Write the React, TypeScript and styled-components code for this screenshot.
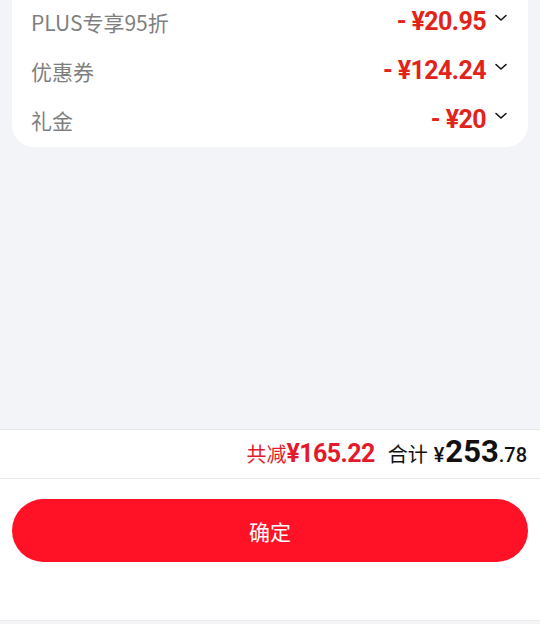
import React, { FC } from "react";
import styled, { createGlobalStyle } from "styled-components";

const GlobalStyle = createGlobalStyle`
    html, body {
        margin: 0;
        padding: 0;
        background: #f3f4f8;
    }
    body {
        font-family: "Noto Sans CJK SC", "Noto Sans", sans-serif;
    }
`;

const Page = styled.div`
    display: flex;
    flex-direction: column;
    height: 624px;
    overflow: hidden;
    background: #f3f4f8;
`;

const Content = styled.div`
    flex: 1;
    padding: 0 12px;
`;

const Card = styled.div`
    margin-top: -3px;
    padding-bottom: 3px;
    background: #ffffff;
    border-radius: 0 0 22px 22px;
`;

const Row = styled.div`
    display: flex;
    align-items: center;
    justify-content: space-between;
    height: 49px;
    padding: 0 20px 0 19px;
`;

const Label = styled.span`
    font-family: "Noto Sans CJK SC", sans-serif;
    font-size: 21px;
    font-weight: 400;
    color: #7f7f7f;
`;

const Value = styled.div`
    display: flex;
    align-items: center;
    gap: 8px;
`;

const Amount = styled.span`
    font-family: "Roboto", "Noto Sans CJK SC", sans-serif;
    font-size: 25px;
    font-weight: 700;
    color: #e2231a;
    letter-spacing: -0.6px;
`;

const Chevron = styled.svg`
    width: 14px;
    height: 14px;
    margin-top: -8px;
`;

const Summary = styled.div`
    display: flex;
    align-items: baseline;
    justify-content: flex-end;
    height: 50px;
    padding: 0 13px 0 0;
    background: #ffffff;
    border-top: 1px solid #e6e7eb;
    border-bottom: 1px solid #e6e7eb;
    box-sizing: border-box;
    line-height: 44px;
`;

const Reduce = styled.span`
    font-family: "Noto Sans CJK SC", sans-serif;
    font-size: 20px;
    color: #e31a2c;
`;

const ReduceNum = styled.span`
    font-family: "Roboto", sans-serif;
    font-size: 25px;
    font-weight: 700;
    color: #e31a2c;
    letter-spacing: -0.6px;
    margin-right: 13px;
`;

const Total = styled.span`
    font-family: "Noto Sans CJK SC", sans-serif;
    font-size: 20px;
    color: #111111;
    margin-right: 6px;
`;

const Yen = styled.span`
    font-family: "Roboto", sans-serif;
    font-size: 20px;
    font-weight: 500;
    color: #111111;
    margin-right: 1px;
`;

const Big = styled.span`
    font-family: "Roboto", sans-serif;
    font-size: 31px;
    font-weight: 700;
    color: #111111;
`;

const Small = styled.span`
    font-family: "Roboto", sans-serif;
    font-size: 20px;
    font-weight: 500;
    color: #111111;
`;

const Bottom = styled.div`
    height: 142px;
    padding: 20px 12px 0;
    box-sizing: border-box;
    background: #ffffff;
    border-bottom: 1px solid #ececef;
`;

const Confirm = styled.button`
    display: flex;
    align-items: center;
    justify-content: center;
    width: 100%;
    height: 63px;
    border: none;
    border-radius: 32px;
    background: #ff1126;
    color: #ffffff;
    font-family: "Noto Sans CJK SC", sans-serif;
    font-size: 21px;
    cursor: pointer;
`;

const Tail = styled.div`
    height: 3px;
    background: #f5f5f7;
`;

const discounts = [
    { label: "PLUS专享95折", amount: "- ¥20.95" },
    { label: "优惠券", amount: "- ¥124.24" },
    { label: "礼金", amount: "- ¥20" },
];

const Arrow: FC = () => (
    <Chevron viewBox="0 0 14 14">
        <path d="M2 4.5 L7 9 L12 4.5" fill="none" stroke="#111" strokeWidth="1.6" strokeLinecap="round" strokeLinejoin="round" />
    </Chevron>
);

const App: FC = () => {
    return (
        <>
            <GlobalStyle />
            <Page>
                <Content>
                    <Card>
                        {discounts.map((d) => (
                            <Row key={d.label}>
                                <Label>{d.label}</Label>
                                <Value>
                                    <Amount>{d.amount}</Amount>
                                    <Arrow />
                                </Value>
                            </Row>
                        ))}
                    </Card>
                </Content>
                <Summary>
                    <Reduce>共减</Reduce>
                    <ReduceNum>¥165.22</ReduceNum>
                    <Total>合计</Total>
                    <Yen>¥</Yen>
                    <Big>253</Big>
                    <Small>.78</Small>
                </Summary>
                <Bottom>
                    <Confirm type="button">确定</Confirm>
                </Bottom>
                <Tail />
            </Page>
        </>
    );
};

export default App;
